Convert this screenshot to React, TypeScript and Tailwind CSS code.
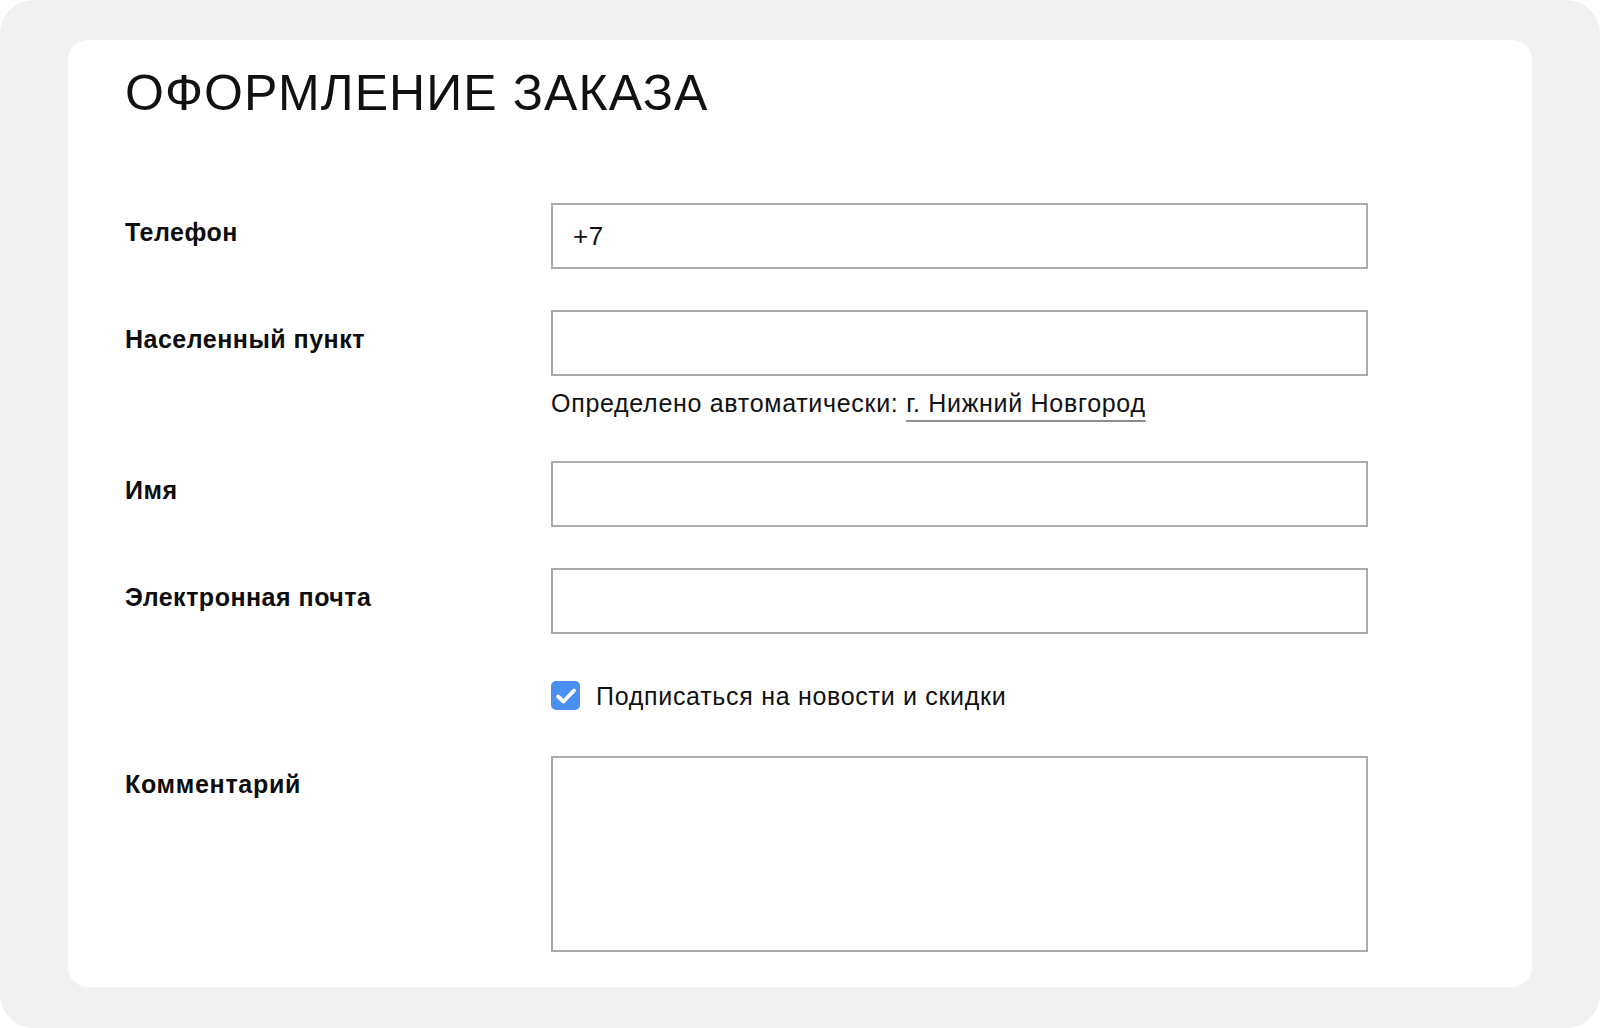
import React from "react";

const font = { fontFamily: '"Liberation Sans", Arial, sans-serif' };

function Label({ children }: { children: React.ReactNode }) {
  return (
    <div className="pt-[15px] text-[25px] leading-[28px] font-bold tracking-[0.5px] text-[#0d0d0d]">{children}</div>
  );
}

function Input({ value }: { value?: string }) {
  return (
    <div className="h-[66px] w-[817px] border-2 border-[#ababab] bg-white flex items-center pl-[20px] text-[26px] tracking-[0.6px] text-[#111]">
      {value}
    </div>
  );
}

export default function App() {
  return (
    <div className="w-[1600px] h-[1028px] bg-white" style={font}>
      <div className="w-full h-full rounded-[34px] bg-[#f1f1f1] pt-[40px] px-[68px]">
        <div className="h-[947px] w-[1464px] rounded-[20px] bg-white pl-[57px] pt-[28px]">
          <h1 className="text-[50px] leading-[50px] font-normal text-[#111] tracking-[1.1px]">
            ОФОРМЛЕНИЕ ЗАКАЗА
          </h1>

          <div className="mt-[85px] flex flex-col">
            <div className="grid grid-cols-[426px_817px]">
              <Label>Телефон</Label>
              <Input value="+7" />
            </div>

            <div className="grid grid-cols-[426px_817px] mt-[41px]">
              <Label>Населенный пункт</Label>
              <div className="flex flex-col">
                <Input />
                <div className="mt-[11px] text-[25px] leading-[32px] tracking-[0.7px] text-[#111]">
                  Определено автоматически:{" "}
                  <span className="underline decoration-[#8d8d8d] decoration-[1.5px] underline-offset-[8px]">
                    г. Нижний Новгород
                  </span>
                </div>
              </div>
            </div>

            <div className="grid grid-cols-[426px_817px] mt-[42px]">
              <Label>Имя</Label>
              <Input />
            </div>

            <div className="grid grid-cols-[426px_817px] mt-[41px]">
              <Label>Электронная почта</Label>
              <Input />
            </div>

            <div className="grid grid-cols-[426px_817px] mt-[47px]">
              <div />
              <div className="flex items-center gap-[16px]">
                <div className="w-[29px] h-[29px] rounded-[5px] bg-[#4a8ff2] flex items-center justify-center">
                  <svg width="22" height="18" viewBox="0 0 22 18" fill="none">
                    <path d="M3 9.5 L8.5 14.5 L19 3.5" stroke="white" strokeWidth="3.8" strokeLinecap="round" strokeLinejoin="round" />
                  </svg>
                </div>
                <span className="text-[25px] leading-[28px] tracking-[0.7px] text-[#111]">Подписаться на новости и скидки</span>
              </div>
            </div>

            <div className="grid grid-cols-[426px_817px] mt-[46px]">
              <div className="pt-[14px]">
                <div className="text-[25px] leading-[28px] font-bold tracking-[0.7px] text-[#0d0d0d]">Комментарий</div>
              </div>
              <div className="h-[196px] w-[817px] border-2 border-[#ababab] bg-white" />
            </div>
          </div>
        </div>
      </div>
    </div>
  );
}
